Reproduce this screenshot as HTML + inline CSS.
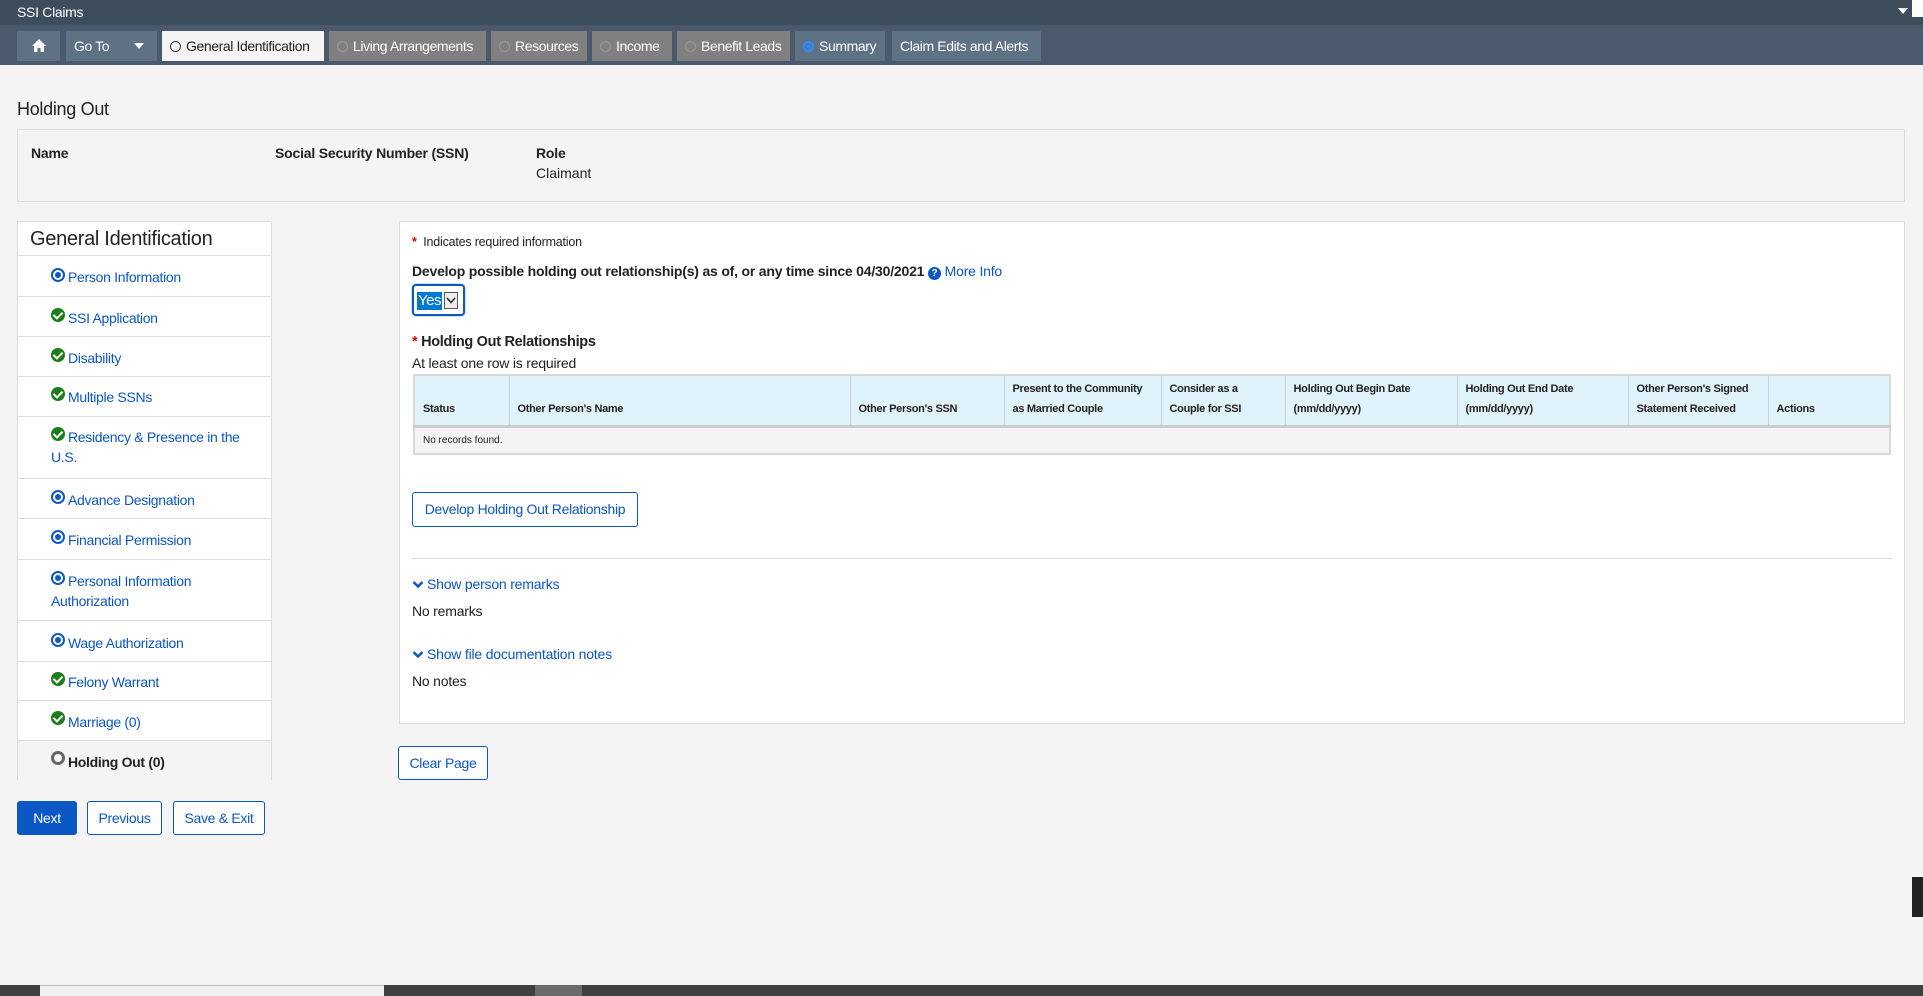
<!DOCTYPE html>
<html><head><meta charset="utf-8"><style>
*{box-sizing:border-box;margin:0;padding:0}
body{width:1923px;height:996px;background:#f4f4f4;font-family:"Liberation Sans",Arial,sans-serif;color:#222;position:relative;overflow:hidden;font-size:14px}
.a{position:absolute}
.top{left:0;top:0;width:1923px;height:25px;background:#3d4d5c;color:#fff;font-size:14px;padding:4px 0 0 17px;letter-spacing:-0.3px}
.nav{left:0;top:25px;width:1923px;height:40px;background:#4a5a6c}
.nb{position:absolute;top:6px;height:30px;color:#fff;font-size:14px;letter-spacing:-0.4px;line-height:30px;padding-left:8px;white-space:nowrap;overflow:hidden}
.g{background:#808080}.s{background:#5f7185}
.rad{display:inline-block;width:11px;height:11px;border:1.5px solid #aaa;border-radius:50%;margin-right:5px;vertical-align:-1px}
a,.lk{color:#0b57c4;text-decoration:none}
.info{left:17px;top:129px;width:1888px;height:73px;border:1px solid #ddd;background:#f4f4f4}
.lbl{font-weight:bold;font-size:14px;letter-spacing:-0.2px}
.side{left:17px;top:221px;width:255px;height:559px;border:1px solid #ddd;background:#fff}
.it{position:absolute;left:0;width:253px;border-top:1px solid #ddd;font-size:14px;letter-spacing:-0.3px;line-height:20px;padding-left:33px;color:#0b57c4}
.ic{position:absolute;left:33px;width:14px;height:14px;border-radius:50%}
.ok{background:#1a7f1a}
.ok:after{content:"";position:absolute;left:4px;top:2px;width:4px;height:7px;border:solid #fff;border-width:0 2px 2px 0;transform:rotate(45deg)}
.bl{border:2px solid #0b57c4;background:#fff}
.bl:after{content:"";position:absolute;left:2px;top:2px;width:6px;height:6px;border-radius:50%;background:#0b57c4}
.main{left:399px;top:221px;width:1506px;height:503px;border:1px solid #ddd;background:#fff}
.req{color:#d00;font-weight:bold}
table{position:absolute;left:413px;top:374px;width:1478px;border-collapse:collapse;border:2px solid #d9d9d9;table-layout:fixed}
th{background:#e0f3fa;font-size:11px;letter-spacing:-0.3px;text-align:left;font-weight:bold;height:51px;vertical-align:bottom;padding:0 8px 6px;line-height:20px;border-right:1px solid #ccd;border-bottom:3px solid #ccc;white-space:nowrap;overflow:hidden}
td{background:#f4f4f4;font-size:10px;height:28px;padding-left:8px}
.btn{position:absolute;border:1px solid #0b57c4;border-radius:3px;background:#fff;color:#0b57c4;font-size:14px;letter-spacing:-0.3px;text-align:center;white-space:nowrap}
</style></head><body>
<div class="a top">SSI Claims</div>
<div class="a" style="left:1898px;top:8px;width:0;height:0;border:5px solid transparent;border-top:6px solid #fff"></div>
<div class="a" style="left:1912px;top:0;width:11px;height:17px;background:#fff"></div>
<div class="a nav">
<div class="nb s" style="left:17px;width:43px;padding:0;text-align:center"><svg width="16" height="15" viewBox="0 0 16 15" style="vertical-align:-2px"><path d="M8 1 L1 8 H3 V14 H6.5 V10 H9.5 V14 H13 V8 H15 Z" fill="#fff"/></svg></div>
<div class="nb s" style="left:66px;width:91px;padding-left:8px">Go To <span style="position:absolute;left:68px;top:12px;border:5px solid transparent;border-top:6px solid #fff"></span></div>
<div class="nb" style="left:162px;width:162px;background:#f4f4f4;color:#222"><span class="rad" style="border-color:#333"></span>General Identification</div>
<div class="nb g" style="left:329px;width:157px"><span class="rad" style="border-color:#999"></span>Living Arrangements</div>
<div class="nb g" style="left:491px;width:96px"><span class="rad" style="border-color:#999"></span>Resources</div>
<div class="nb g" style="left:592px;width:80px"><span class="rad" style="border-color:#999"></span>Income</div>
<div class="nb g" style="left:677px;width:113px"><span class="rad" style="border-color:#999"></span>Benefit Leads</div>
<div class="nb s" style="left:795px;width:90px"><span class="rad" style="border:2px solid #2a8cff;background:radial-gradient(#2a8cff 40%,transparent 45%)"></span>Summary</div>
<div class="nb s" style="left:892px;width:149px">Claim Edits and Alerts</div>
</div>
<div class="a" style="left:17px;top:99px;font-size:18px;letter-spacing:-0.3px">Holding Out</div>
<div class="a info">
<div class="a lbl" style="left:13px;top:15px">Name</div>
<div class="a lbl" style="left:257px;top:15px">Social Security Number (SSN)</div>
<div class="a lbl" style="left:518px;top:15px">Role</div>
<div class="a" style="left:518px;top:35px;font-size:14px">Claimant</div>
</div>
<div class="a side">
<div class="a" style="left:12px;top:6px;font-size:20px;letter-spacing:-0.3px">General Identification</div>
<div class="it" style="top:33px;height:41px;padding-top:11px;padding-left:50px"><span class="ic bl" style="top:12px"></span>Person Information</div>
<div class="it" style="top:74px;height:40px;padding-top:11px;padding-left:50px"><span class="ic ok" style="top:11px"></span>SSI Application</div>
<div class="it" style="top:114px;height:40px;padding-top:11px;padding-left:50px"><span class="ic ok" style="top:11px"></span>Disability</div>
<div class="it" style="top:154px;height:40px;padding-top:10px;padding-left:50px"><span class="ic ok" style="top:10px"></span>Multiple SSNs</div>
<div class="it" style="top:194px;height:62px;padding-top:10px;padding-left:50px"><span class="ic ok" style="top:10px"></span>Residency &amp; Presence in the<br><span style="margin-left:-17px">U.S.</span></div>
<div class="it" style="top:256px;height:40px;padding-top:11px;padding-left:50px"><span class="ic bl" style="top:11px"></span>Advance Designation</div>
<div class="it" style="top:296px;height:41px;padding-top:11px;padding-left:50px"><span class="ic bl" style="top:11px"></span>Financial Permission</div>
<div class="it" style="top:337px;height:61px;padding-top:11px;padding-left:50px"><span class="ic bl" style="top:11px"></span>Personal Information<br><span style="margin-left:-17px">Authorization</span></div>
<div class="it" style="top:398px;height:41px;padding-top:12px;padding-left:50px"><span class="ic bl" style="top:12px"></span>Wage Authorization</div>
<div class="it" style="top:439px;height:39px;padding-top:10px;padding-left:50px"><span class="ic ok" style="top:10px"></span>Felony Warrant</div>
<div class="it" style="top:478px;height:40px;padding-top:11px;padding-left:50px"><span class="ic ok" style="top:10px"></span>Marriage (0)</div>
<div class="it" style="top:518px;height:40px;padding-top:11px;padding-left:50px;background:#f4f4f4;color:#222;font-weight:bold"><span class="ic" style="top:10px;border:3px solid #666;background:#fff"></span>Holding Out (0)</div>
</div>
<div class="a main"></div>
<div class="a" style="left:412px;top:235px;font-size:12.5px;letter-spacing:-0.2px"><span class="req">*</span>&nbsp; Indicates required information</div>
<div class="a" style="left:412px;top:263px;font-size:14px;letter-spacing:-0.2px;font-weight:bold">Develop possible holding out relationship(s) as of, or any time since 04/30/2021 <span style="font-weight:normal"><span style="display:inline-block;width:13px;height:13px;border-radius:50%;background:#0b57c4;color:#fff;font-size:10px;text-align:center;line-height:13px;font-weight:bold">?</span> <span class="lk">More Info</span></span></div>
<div class="a" style="left:412px;top:284px;width:53px;height:32px;border:2px solid #0b57c4;border-radius:4px;box-shadow:0 0 2px #7ab"><span class="a" style="left:3px;top:6px;background:#0078d7;color:#fff;font-size:15px;letter-spacing:-0.5px;padding:0 1px;line-height:18px">Yes</span><span class="a" style="left:30px;top:6px;width:14px;height:17px;border:1px solid #555;background:#eee"><svg width="12" height="15" viewBox="0 0 12 15"><path d="M2 5 L6 9.5 L10 5" stroke="#222" stroke-width="1.5" fill="none"/></svg></span></div>
<div class="a" style="left:412px;top:334px;font-size:14.5px;letter-spacing:-0.3px;font-weight:bold"><span class="req">*</span> Holding Out Relationships</div>
<div class="a" style="left:412px;top:355px;font-size:14px;letter-spacing:-0.2px">At least one row is required</div>
<table><colgroup><col style="width:95px"><col style="width:341px"><col style="width:154px"><col style="width:157px"><col style="width:124px"><col style="width:172px"><col style="width:171px"><col style="width:140px"><col></colgroup><tr>
<th>Status</th><th>Other Person's Name</th><th>Other Person's SSN</th><th>Present to the Community<br>as Married Couple</th><th>Consider as a<br>Couple for SSI</th><th>Holding Out Begin Date<br>(mm/dd/yyyy)</th><th>Holding Out End Date<br>(mm/dd/yyyy)</th><th>Other Person's Signed<br>Statement Received</th><th>Actions</th></tr>
<tr><td colspan="9">No records found.</td></tr></table>
<div class="btn" style="left:412px;top:492px;width:226px;height:35px;line-height:33px">Develop Holding Out Relationship</div>
<div class="a" style="left:412px;top:558px;width:1480px;height:1px;background:#ddd"></div>
<div class="a lk" style="left:412px;top:576px;font-size:14px;letter-spacing:-0.2px"><svg width="12" height="9" viewBox="0 0 12 9" style="margin-right:3px"><path d="M1.5 2 L6 6.5 L10.5 2" stroke="#0b57c4" stroke-width="2.5" fill="none"/></svg>Show person remarks</div>
<div class="a" style="left:412px;top:603px;font-size:14px;letter-spacing:-0.2px">No remarks</div>
<div class="a lk" style="left:412px;top:646px;font-size:14px;letter-spacing:-0.2px"><svg width="12" height="9" viewBox="0 0 12 9" style="margin-right:3px"><path d="M1.5 2 L6 6.5 L10.5 2" stroke="#0b57c4" stroke-width="2.5" fill="none"/></svg>Show file documentation notes</div>
<div class="a" style="left:412px;top:673px;font-size:14px;letter-spacing:-0.2px">No notes</div>
<div class="btn" style="left:398px;top:746px;width:90px;height:34px;line-height:32px">Clear Page</div>
<div class="btn" style="left:17px;top:801px;width:60px;height:34px;line-height:32px;background:#0b57c4;color:#fff">Next</div>
<div class="btn" style="left:87px;top:801px;width:75px;height:34px;line-height:32px">Previous</div>
<div class="btn" style="left:173px;top:801px;width:92px;height:34px;line-height:32px">Save &amp; Exit</div>
<div class="a" style="left:1912px;top:877px;width:11px;height:40px;background:#222"></div>
<div class="a" style="left:0;top:985px;width:1923px;height:11px;background:#404040"></div>
<div class="a" style="left:40px;top:985px;width:344px;height:11px;background:#f0f0f0;border-top:1px solid #bbb"></div>
<div class="a" style="left:535px;top:985px;width:47px;height:11px;background:#6a6a6a"></div>
</body></html>
